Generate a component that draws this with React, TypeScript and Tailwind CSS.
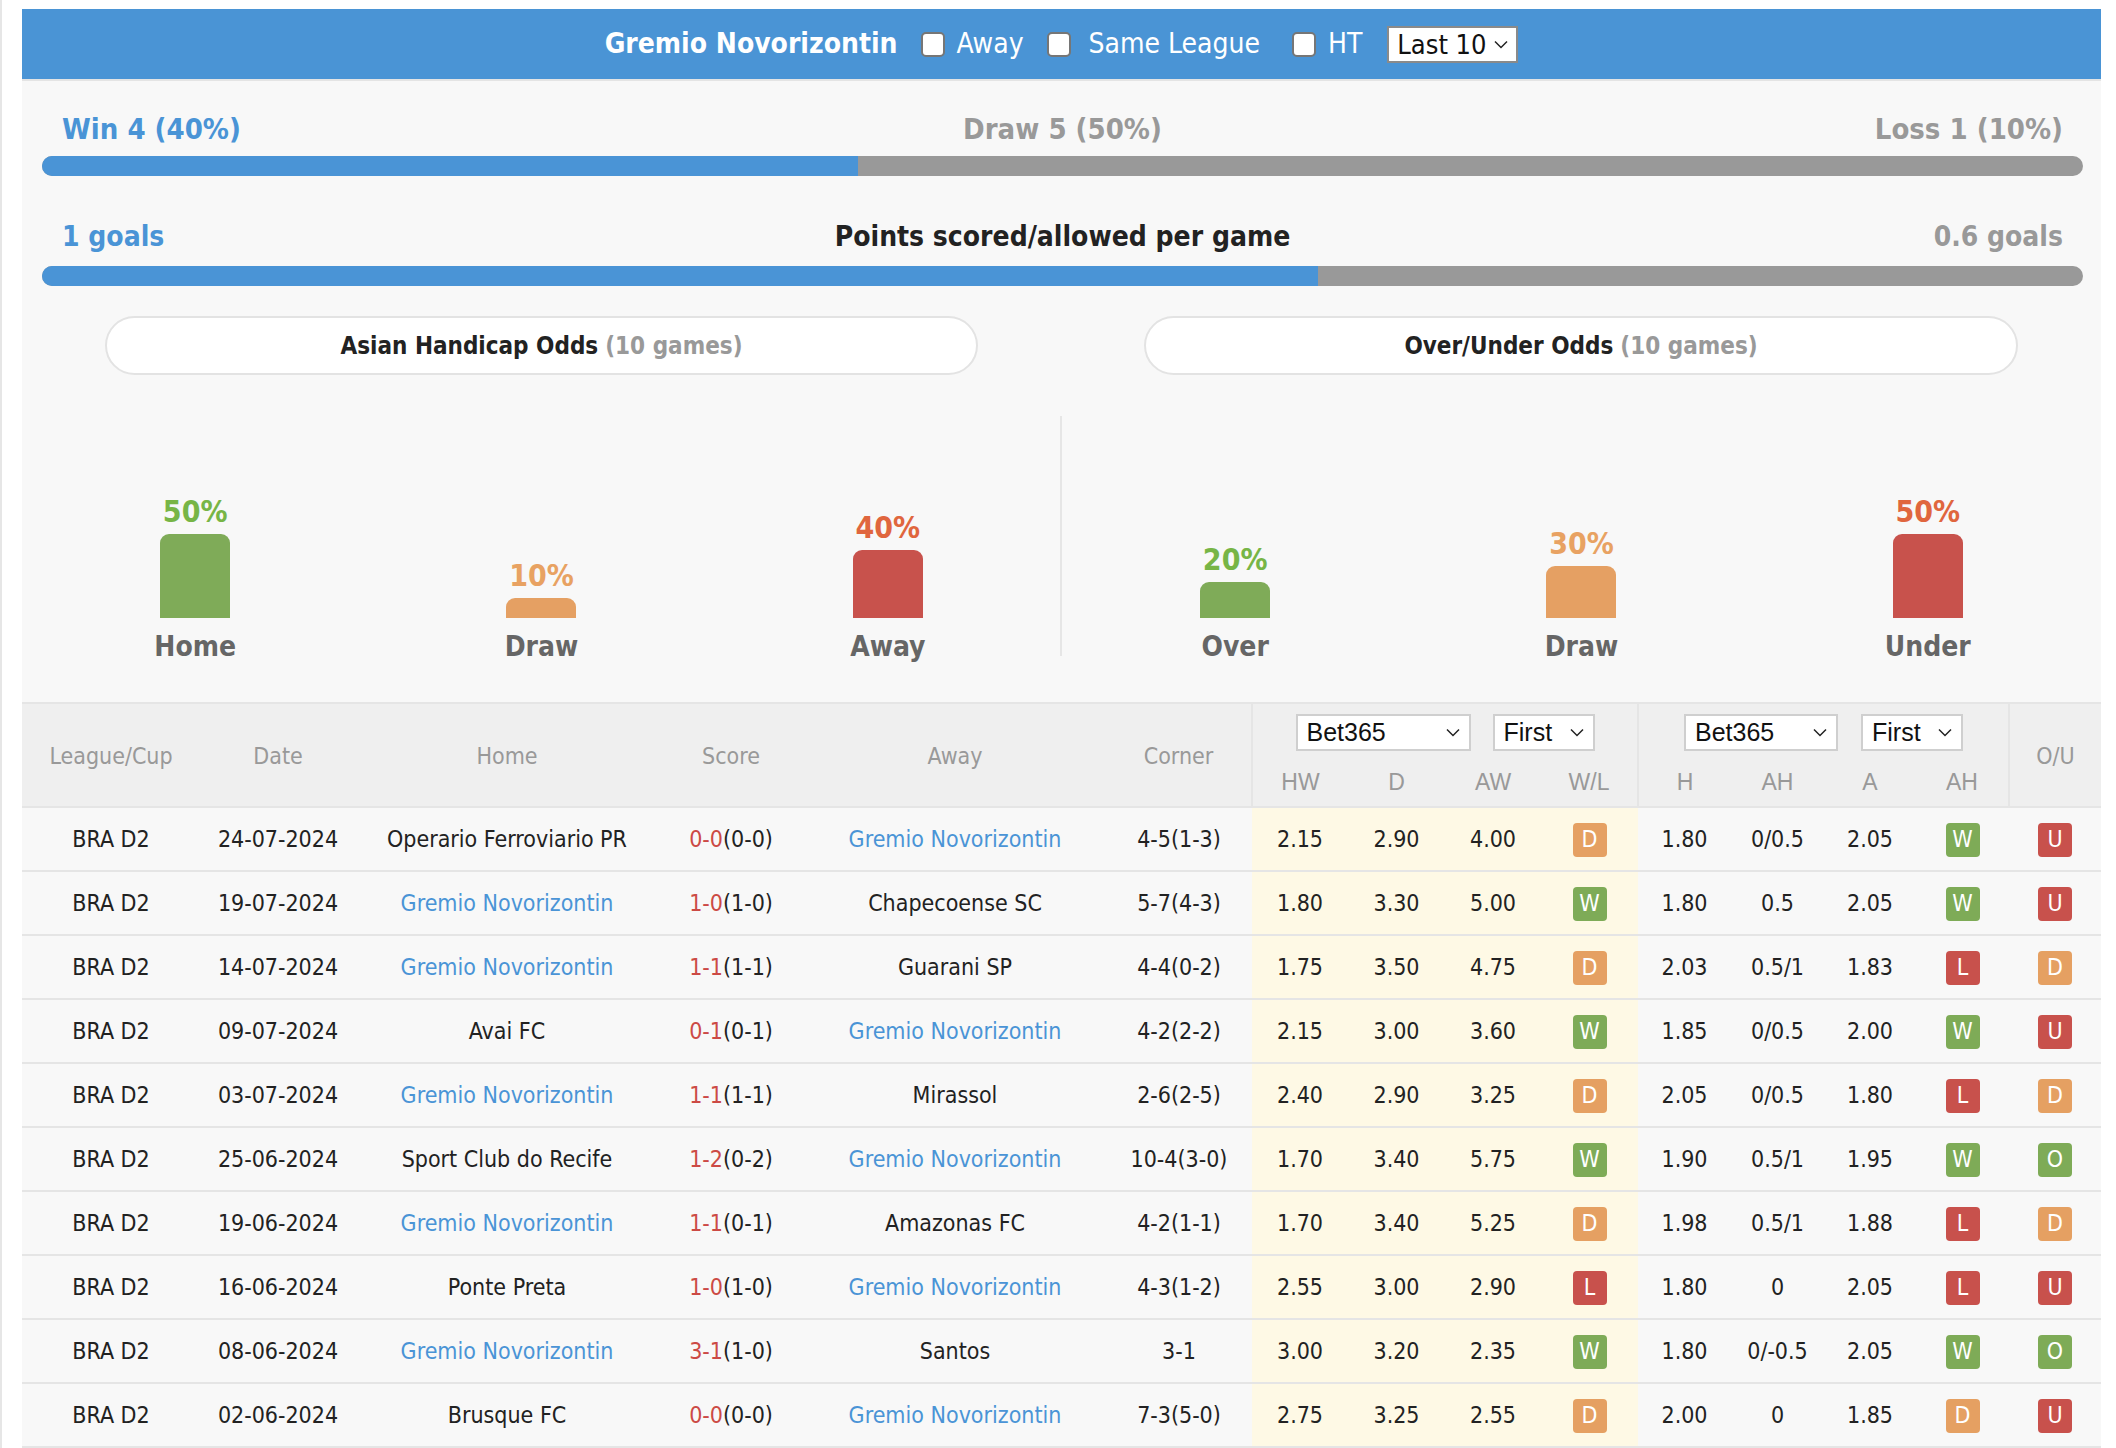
import React from "react";

type Row = {
  date: string;
  home: string;
  away: string;
  s: string;
  ht: string;
  corner: string;
  o: [string, string, string];
  wl: string;
  ah: [string, string, string];
  ahr: string;
  ou: string;
};

const TEAM = "Gremio Novorizontin";

const rows: Row[] = [
  { date: "24-07-2024", home: "Operario Ferroviario PR", away: TEAM, s: "0-0", ht: "(0-0)", corner: "4-5(1-3)", o: ["2.15", "2.90", "4.00"], wl: "D", ah: ["1.80", "0/0.5", "2.05"], ahr: "W", ou: "U" },
  { date: "19-07-2024", home: TEAM, away: "Chapecoense SC", s: "1-0", ht: "(1-0)", corner: "5-7(4-3)", o: ["1.80", "3.30", "5.00"], wl: "W", ah: ["1.80", "0.5", "2.05"], ahr: "W", ou: "U" },
  { date: "14-07-2024", home: TEAM, away: "Guarani SP", s: "1-1", ht: "(1-1)", corner: "4-4(0-2)", o: ["1.75", "3.50", "4.75"], wl: "D", ah: ["2.03", "0.5/1", "1.83"], ahr: "L", ou: "D" },
  { date: "09-07-2024", home: "Avai FC", away: TEAM, s: "0-1", ht: "(0-1)", corner: "4-2(2-2)", o: ["2.15", "3.00", "3.60"], wl: "W", ah: ["1.85", "0/0.5", "2.00"], ahr: "W", ou: "U" },
  { date: "03-07-2024", home: TEAM, away: "Mirassol", s: "1-1", ht: "(1-1)", corner: "2-6(2-5)", o: ["2.40", "2.90", "3.25"], wl: "D", ah: ["2.05", "0/0.5", "1.80"], ahr: "L", ou: "D" },
  { date: "25-06-2024", home: "Sport Club do Recife", away: TEAM, s: "1-2", ht: "(0-2)", corner: "10-4(3-0)", o: ["1.70", "3.40", "5.75"], wl: "W", ah: ["1.90", "0.5/1", "1.95"], ahr: "W", ou: "O" },
  { date: "19-06-2024", home: TEAM, away: "Amazonas FC", s: "1-1", ht: "(0-1)", corner: "4-2(1-1)", o: ["1.70", "3.40", "5.25"], wl: "D", ah: ["1.98", "0.5/1", "1.88"], ahr: "L", ou: "D" },
  { date: "16-06-2024", home: "Ponte Preta", away: TEAM, s: "1-0", ht: "(1-0)", corner: "4-3(1-2)", o: ["2.55", "3.00", "2.90"], wl: "L", ah: ["1.80", "0", "2.05"], ahr: "L", ou: "U" },
  { date: "08-06-2024", home: TEAM, away: "Santos", s: "3-1", ht: "(1-0)", corner: "3-1", o: ["3.00", "3.20", "2.35"], wl: "W", ah: ["1.80", "0/-0.5", "2.05"], ahr: "W", ou: "O" },
  { date: "02-06-2024", home: "Brusque FC", away: TEAM, s: "0-0", ht: "(0-0)", corner: "7-3(5-0)", o: ["2.75", "3.25", "2.55"], wl: "D", ah: ["2.00", "0", "1.85"], ahr: "D", ou: "U" },
];

function Badge({ v }: { v: string }) {
  const cls =
    v === "W" || v === "O"
      ? "bg-[#7eab57]"
      : v === "D"
      ? "bg-[#e5a062]"
      : "bg-[#c8514c]";
  return (
    <span className={`inline-flex items-center justify-center w-[34px] h-[34px] rounded-[4px] text-white text-[23px] leading-none align-middle ${cls}`}>
      {v}
    </span>
  );
}

function Check() {
  return <span className="inline-block w-[24px] h-[25px] bg-white border-2 border-[#767676] rounded-[5px] shrink-0" />;
}

function Chevron() {
  return (
    <svg width="14" height="9" viewBox="0 0 14 9" fill="none">
      <path d="M1 1.5 L7 7.5 L13 1.5" stroke="#222" strokeWidth="1.5" />
    </svg>
  );
}

function Select({ label, w }: { label: string; w: string }) {
  return (
    <span className={`inline-flex items-center justify-between h-[37px] bg-white border-2 border-[#cfcfcf] pl-[9px] pr-[9px] font-['Liberation_Sans',Arial,sans-serif] text-[25px] text-[#111] font-normal ${w}`}>
      <span className="leading-none">{label}</span>
      <Chevron />
    </span>
  );
}

function ChartCol({ pct, label, color, bar }: { pct: number; label: string; color: string; bar: string }) {
  const h = 4 + pct * 1.6;
  return (
    <div className="flex-1 flex flex-col items-center justify-end">
      <div className={`text-[30px] font-bold leading-[30px] ${color}`}>{pct}%</div>
      <div className={`w-[70px] rounded-t-[9px] mt-[7px] ${bar}`} style={{ height: h }} />
      <div className="text-[28px] font-bold text-[#666] leading-[30px] mt-[14px] -mb-[6px]">{label}</div>
    </div>
  );
}

export default function App() {
  const font = "font-['DejaVu_Sans_Condensed','DejaVu_Sans',sans-serif]";
  return (
    <div className={`w-[2116px] min-h-[1448px] bg-white border-l-2 border-[#e6e6e6] ${font}`}>
      <div className="ml-[20px] w-[2079px] pt-[9px]">
        {/* Header */}
        <div className="h-[70px] bg-[#4a94d5] border-b-2 border-[#e4e4e4] box-content flex items-center justify-center text-white text-[28px]">
          <span className="font-bold">Gremio Novorizontin</span>
          <span className="ml-[23px] mr-[12px] flex"><Check /></span>
          <span>Away</span>
          <span className="ml-[23px] mr-[18px] flex"><Check /></span>
          <span>Same League</span>
          <span className="ml-[32px] mr-[12px] flex"><Check /></span>
          <span>HT</span>
          <span className="ml-[25px] inline-flex items-center justify-between w-[131px] h-[37px] bg-white border-2 border-[#8a8a8a] px-[8px] text-[#111] text-[27px]">
            <span className="leading-none">Last 10</span>
            <Chevron />
          </span>
        </div>

        {/* Content */}
        <div className="bg-[#f8f8f8]">
          <div className="pl-[20px] pr-[18px] pt-[32px]">
            <div className="grid grid-cols-[1fr_auto_1fr] px-[20px] text-[29px] font-bold leading-[32px]">
              <span className="text-[#4a94d6] justify-self-start">Win 4 (40%)</span>
              <span className="text-[#999]">Draw 5 (50%)</span>
              <span className="text-[#999] justify-self-end">Loss 1 (10%)</span>
            </div>
            <div className="mt-[11px] h-[20px] rounded-full bg-[#999] overflow-hidden flex">
              <div className="bg-[#4a94d6] h-full" style={{ width: "40%" }} />
            </div>
            <div className="mt-[45px] grid grid-cols-[1fr_auto_1fr] px-[20px] text-[28px] font-bold leading-[32px]">
              <span className="text-[#4a94d6] justify-self-start">1 goals</span>
              <span className="text-[#222]">Points scored/allowed per game</span>
              <span className="text-[#999] justify-self-end">0.6 goals</span>
            </div>
            <div className="mt-[13px] h-[20px] rounded-full bg-[#999] overflow-hidden flex">
              <div className="bg-[#4a94d6] h-full" style={{ width: "62.5%" }} />
            </div>
          </div>

          {/* Pills */}
          <div className="flex mt-[30px]">
            <div className="w-[1039px] px-[83px]">
              <div className="h-[59px] rounded-full bg-white border-2 border-[#e3e3e3] flex items-center justify-center text-[24px] font-bold">
                <span className="text-[#222]">Asian Handicap Odds</span>
                <span className="text-[#999] ml-[7px]">(10 games)</span>
              </div>
            </div>
            <div className="flex-1 px-[83px]">
              <div className="h-[59px] rounded-full bg-white border-2 border-[#e3e3e3] flex items-center justify-center text-[24px] font-bold">
                <span className="text-[#222]">Over/Under Odds</span>
                <span className="text-[#999] ml-[7px]">(10 games)</span>
              </div>
            </div>
          </div>

          {/* Charts */}
          <div className="flex mt-[41px] h-[240px]">
            <div className="w-[1039px] flex">
              <ChartCol pct={50} label="Home" color="text-[#77b546]" bar="bg-[#7fab58]" />
              <ChartCol pct={10} label="Draw" color="text-[#e8a262]" bar="bg-[#e5a063]" />
              <ChartCol pct={40} label="Away" color="text-[#e0663e]" bar="bg-[#c8524c]" />
            </div>
            <div className="flex-1 flex border-l-2 border-[#e6e6e6] -ml-[1px]">
              <ChartCol pct={20} label="Over" color="text-[#77b546]" bar="bg-[#7fab58]" />
              <ChartCol pct={30} label="Draw" color="text-[#e8a262]" bar="bg-[#e5a063]" />
              <ChartCol pct={50} label="Under" color="text-[#e0663e]" bar="bg-[#c8524c]" />
            </div>
          </div>

          {/* Table */}
          <table className="mt-[46px] w-[2079px] table-fixed border-collapse text-[23px] text-[#222]">
            <colgroup>
              <col className="w-[178px]" />
              <col className="w-[156px]" />
              <col className="w-[302px]" />
              <col className="w-[146px]" />
              <col className="w-[302px]" />
              <col className="w-[146px]" />
              <col className="w-[96px]" />
              <col className="w-[97px]" />
              <col className="w-[96px]" />
              <col className="w-[97px]" />
              <col className="w-[93px]" />
              <col className="w-[93px]" />
              <col className="w-[92px]" />
              <col className="w-[93px]" />
              <col className="w-[92px]" />
            </colgroup>
            <thead>
              <tr className="bg-[#efefef] text-[#999] border-t-2 border-[#e5e5e5]">
                <th rowSpan={2} className="font-normal text-[23px] h-[57px] pt-[3px]">League/Cup</th>
                <th rowSpan={2} className="font-normal text-[23px] pt-[3px]">Date</th>
                <th rowSpan={2} className="font-normal text-[23px] pt-[3px]">Home</th>
                <th rowSpan={2} className="font-normal text-[23px] pt-[3px]">Score</th>
                <th rowSpan={2} className="font-normal text-[23px] pt-[3px]">Away</th>
                <th rowSpan={2} className="font-normal text-[23px] pt-[3px]">Corner</th>
                <th colSpan={4} className="font-normal border-l-2 border-[#e5e5e5] h-[57px] align-top pt-[10px]">
                  <div className="flex justify-center gap-[22px]">
                    <Select label="Bet365" w="w-[175px]" />
                    <Select label="First" w="w-[102px]" />
                  </div>
                </th>
                <th colSpan={4} className="font-normal border-l-2 border-[#e5e5e5] align-top pt-[10px]">
                  <div className="flex justify-center gap-[23px]">
                    <Select label="Bet365" w="w-[154px]" />
                    <Select label="First" w="w-[102px]" />
                  </div>
                </th>
                <th rowSpan={2} className="font-normal text-[23px] border-l-2 border-[#e5e5e5] pt-[3px]">O/U</th>
              </tr>
              <tr className="bg-[#efefef] text-[#999] font-['Liberation_Sans',Arial,sans-serif] text-[23px]">
                <th className="font-normal h-[47px] border-l-2 border-[#e5e5e5] align-top pt-[5px]">HW</th>
                <th className="font-normal align-top pt-[5px]">D</th>
                <th className="font-normal align-top pt-[5px]">AW</th>
                <th className="font-normal align-top pt-[5px]">W/L</th>
                <th className="font-normal border-l-2 border-[#e5e5e5] align-top pt-[5px]">H</th>
                <th className="font-normal align-top pt-[5px]">AH</th>
                <th className="font-normal align-top pt-[5px]">A</th>
                <th className="font-normal align-top pt-[5px]">AH</th>
              </tr>
            </thead>
            <tbody>
              {rows.map((r, i) => (
                <tr key={i} className="border-t-2 border-[#e5e5e5] text-center">
                  <td className="h-[64px]">BRA D2</td>
                  <td>{r.date}</td>
                  <td className={r.home === TEAM ? "text-[#4a94d6]" : ""}>{r.home}</td>
                  <td>
                    <span className="text-[#cc4a45]">{r.s}</span>
                    {r.ht}
                  </td>
                  <td className={r.away === TEAM ? "text-[#4a94d6]" : ""}>{r.away}</td>
                  <td>{r.corner}</td>
                  <td className="bg-[#fef9e5]">{r.o[0]}</td>
                  <td className="bg-[#fef9e5]">{r.o[1]}</td>
                  <td className="bg-[#fef9e5]">{r.o[2]}</td>
                  <td className="bg-[#fef9e5]"><Badge v={r.wl} /></td>
                  <td>{r.ah[0]}</td>
                  <td>{r.ah[1]}</td>
                  <td>{r.ah[2]}</td>
                  <td><Badge v={r.ahr} /></td>
                  <td><Badge v={r.ou} /></td>
                </tr>
              ))}
              <tr className="border-t-2 border-[#e5e5e5]"><td colSpan={15} className="h-0 p-0" /></tr>
            </tbody>
          </table>
        </div>
      </div>
    </div>
  );
}
